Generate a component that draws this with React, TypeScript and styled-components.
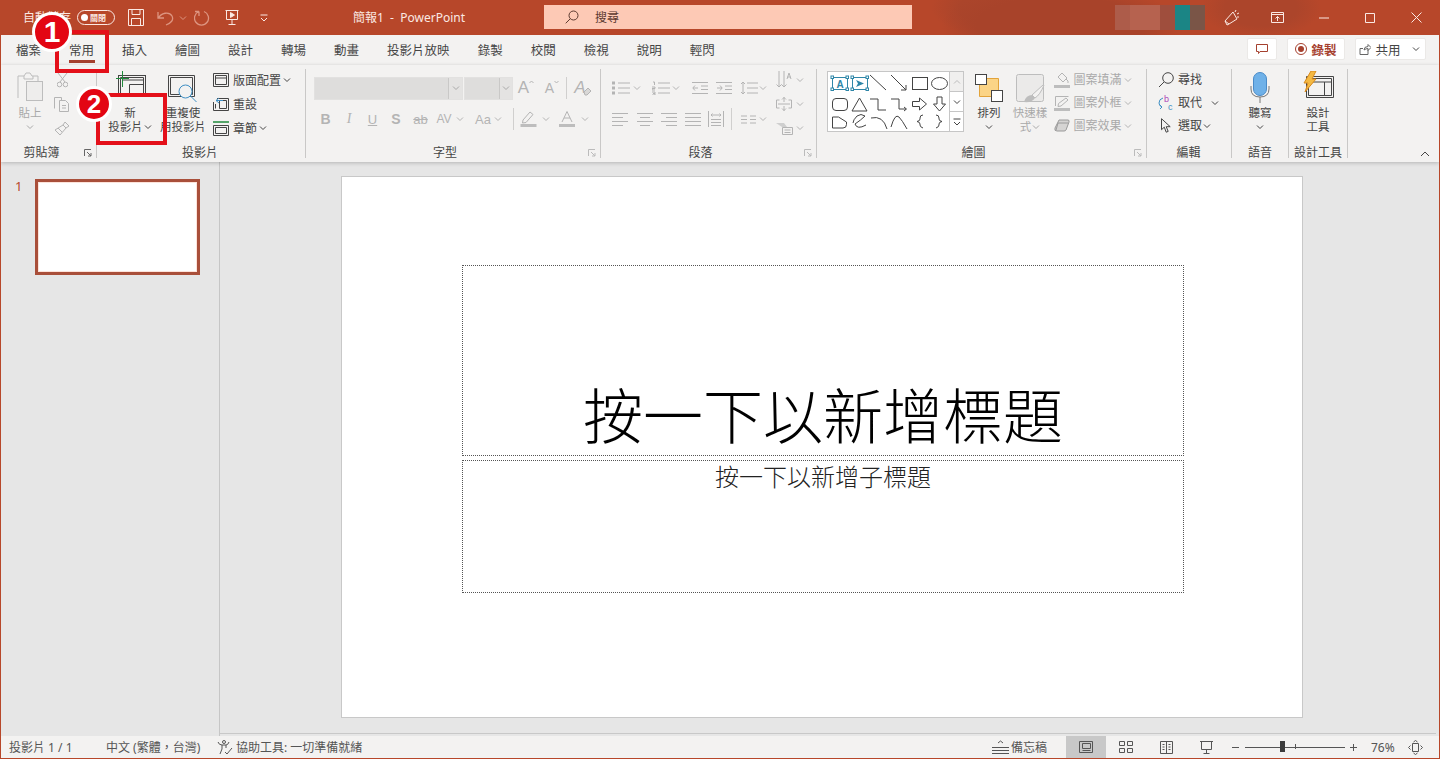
import React from "react";
import styled, { createGlobalStyle } from "styled-components";

const Global = createGlobalStyle`
  html, body { margin: 0; padding: 0; background: #e6e6e6; }
  body { font-family: "Noto Sans", "Noto Sans CJK TC", "Liberation Sans", sans-serif; overflow: hidden; }
  * { box-sizing: border-box; }
`;

const RED = "#b7472a";
const DIS = "#b4b4b4";
const INK = "#454545";

const Frame = styled.div`
  position: relative; width: 1440px; height: 759px; display: flex; flex-direction: column;
  border: 1px solid ${RED}; border-top: 0; background: #e6e6e6; overflow: hidden;
`;

/* ---------- generic drawing ---------- */
const Svg = styled.svg<{ $c?: string }>`
  display: block; flex: none; fill: none; stroke: currentColor; stroke-width: 1; color: ${p => p.$c ?? INK};
`;
const Chev = ({ c = INK }: { c?: string }) => (
  <Svg $c={c} width="8" height="6" viewBox="0 0 8 6"><path d="M1 1.5l3 3 3-3" /></Svg>
);

/* ---------- title bar ---------- */
const TitleBar = styled.header`
  height: 35px; flex: none; display: flex; align-items: center; color: #fbe9e3;
  background:
    radial-gradient(ellipse 120px 40px at 1060px 25px, #a8432a 0 70%, transparent 100%),
    radial-gradient(ellipse 70px 30px at 1000px 8px, #ab452b 0 60%, transparent 100%),
    radial-gradient(ellipse 60px 30px at 1260px 8px, #ac452b 0 60%, transparent 100%),
    ${RED};
`;
const QuickAccess = styled.div`
  width: 352px; flex: none; display: flex; align-items: center; padding-left: 22px;
`;
const AutoSave = styled.span`font-size: 12px; width: 47px; white-space: nowrap; margin-top: -2px;`;
const Toggle = styled.span`
  margin-left: 7px; width: 38px; height: 15px; border: 1px solid #fbe9e3; border-radius: 8px;
  display: flex; align-items: center; gap: 2px; padding-left: 3px; font-size: 8px; font-weight: 700;
  &::before { content: ""; width: 7px; height: 7px; border-radius: 50%; background: #fff; }
`;
const Qa = styled.span<{ $ml: number }>`margin-left: ${p => p.$ml}px; display: flex;`;
const DocTitle = styled.div`width: 191px; flex: none; font-size: 12px; white-space: pre; margin-top: -2px;`;
const Search = styled.div`
  width: 368px; height: 24px; flex: none; margin-top: -1px; background: #fdc9b5; color: #5c3a30; display: flex; align-items: center;
  padding-left: 21px; gap: 16px; font-size: 12px;
`;
const Mosaic = styled.div`
  margin-left: 203px; width: 90px; height: 25px; flex: none; margin-top: -1px;
  background: linear-gradient(90deg, #ad5c4a 0 15px, #b6624f 15px 45px, #9f4e3d 45px 60px, #1b8585 60px 75px, #7a5547 75px 90px);
`;
const TitleIcon = styled.span<{ $w: number; $ml?: number }>`
  width: ${p => p.$w}px; margin-left: ${p => p.$ml ?? 0}px; flex: none; display: flex; justify-content: center;
`;

/* ---------- tabs ---------- */
const TabBar = styled.nav`
  height: 30px; flex: none; display: flex; align-items: center; background: #f3f2f1; padding-left: 1px; padding-right: 13px;
`;
const Tab = styled.span<{ $on?: boolean }>`
  height: 30px; padding: 0 14px 1px; display: flex; align-items: center; position: relative; font-size: 12.5px; color: ${INK}; white-space: nowrap;
  ${p => p.$on ? `&::after { content: ""; position: absolute; left: 14px; right: 13px; bottom: 2px; height: 3px; background: #a5402e; }` : ""}
`;
const TabActions = styled.div`margin-left: auto; display: flex; gap: 10px; align-items: center; margin-top: -2px;`;
const PillBtn = styled.span<{ $w: number; $c?: string; $b?: boolean }>`
  width: ${p => p.$w}px; height: 22px; background: #fff; border: 1px solid #ebe9e7; border-radius: 2px; display: flex; align-items: center; justify-content: center;
  gap: 4px; font-size: 12.5px; color: ${p => p.$c ?? INK}; font-weight: ${p => p.$b ? 700 : 400};
`;

/* ---------- ribbon ---------- */
const Ribbon = styled.section`
  height: 97px; flex: none; display: flex; background: #f3f2f1; padding: 4px 0; position: relative; z-index: 2;
  box-shadow: 0 1px 4px rgba(0,0,0,.22);
`;
const Group = styled.div<{ $w: number }>`
  width: ${p => p.$w}px; flex: none; display: flex; flex-direction: column; border-right: 1px solid #c9c8c7; position: relative;
`;
const GroupBody = styled.div`flex: 1; display: flex; min-height: 0;`;
const GroupLabel = styled.div<{ $pr?: number }>`
  height: 14px; line-height: 14px; text-align: center; font-size: 12px; color: ${INK}; padding-right: ${p => p.$pr ?? 0}px; margin-bottom: -2px; white-space: nowrap;
`;
const Launcher = styled.span`position: absolute; right: 4px; bottom: 1px;`;
const Big = styled.div<{ $w: number; $ml?: number; $dis?: boolean }>`
  width: ${p => p.$w}px; margin-left: ${p => p.$ml ?? 0}px; flex: none; display: flex; flex-direction: column; align-items: center; padding-top: 2px;
  font-size: 11.5px; line-height: 14px; color: ${p => p.$dis ? "#a9a9a9" : INK}; white-space: nowrap;
`;
const BigIcon = styled.div`height: 35px; display: flex; justify-content: center; align-items: flex-start;`;
const BigLine = styled.div`height: 14px; display: flex; align-items: center; gap: 1px;`;
const Col = styled.div<{ $ml?: number }>`
  margin-left: ${p => p.$ml ?? 0}px; display: flex; flex-direction: column; gap: 2px; flex: none;
`;
const SmallRow = styled.div<{ $h?: number }>`
  height: ${p => p.$h ?? 22}px; display: flex; align-items: center; white-space: nowrap;
`;
const Tool = styled.span<{ $w: number; $ml?: number; $c?: string; $f?: string }>`
  width: ${p => p.$w}px; margin-left: ${p => p.$ml ?? 0}px; flex: none; display: flex; justify-content: center; align-items: center;
  color: ${p => p.$c ?? DIS}; font: ${p => p.$f ?? `13px "Liberation Sans", sans-serif`};
`;
const RowText = styled.span<{ $w: number; $ml?: number; $dis?: boolean }>`
  width: ${p => p.$w}px; margin-left: ${p => p.$ml ?? 4}px; flex: none; padding-bottom: 1px; text-align: center;
  font-size: 12px; color: ${p => p.$dis ? "#a9a9a9" : INK};
`;
const Stack = styled.div<{ $w: number }>`width: ${p => p.$w}px; flex: none;`;
const ToolRow = styled.div<{ $mt: number }>`height: 22px; margin-top: ${p => p.$mt}px; display: flex; align-items: center;`;
const Combo = styled.span<{ $w: number; $ml?: number }>`
  width: ${p => p.$w}px; margin-left: ${p => p.$ml ?? 0}px; height: 23px; flex: none; background: #dedddc; display: flex; justify-content: flex-end;
  border: 1px solid #e2e1e0;
`;
const ComboArrow = styled.span<{ $w: number }>`
  width: ${p => p.$w}px; border-left: 1px solid #c9c8c7; background: #e4e3e2; display: flex; align-items: center; justify-content: center;
`;
const ToolSep = styled.span<{ $ml: number }>`width: 1px; height: 22px; margin-left: ${p => p.$ml}px; background: #d0cfce; flex: none;`;
const Gallery = styled.div`
  margin: 2px 0 0 10px; height: 61px; display: flex; flex: none; align-self: flex-start;
`;
const GalleryBox = styled.div`width: 122px; height: 61px; background: #fff; border: 1px solid #c6c6c6; border-right: 0;`;
const GalleryBtns = styled.div`width: 15px; display: flex; flex-direction: column;`;
const GalleryBtn = styled.span<{ $top?: boolean }>`
  flex: 1; border: 1px solid #c6c6c6; background: ${p => p.$top ? "#f0efee" : "#fff"}; display: flex; align-items: center; justify-content: center; margin-top: ${p => p.$top ? 0 : -1}px;
`;
const Collapse = styled.span`margin: auto 9px 1px auto; align-self: flex-end;`;

/* ---------- main ---------- */
const Main = styled.main`flex: 1; min-height: 0; display: flex; background: #e6e6e6;`;
const Side = styled.aside`width: 219px; flex: none; border-right: 1px solid #c6c6c6; display: flex; padding: 17px 0 0 14px; gap: 15px; align-items: flex-start;`;
const SlideNo = styled.span`font-size: 13px; line-height: 14px; color: ${RED}; width: 5px;`;
const Thumb = styled.div`width: 165px; height: 96px; background: #fff; border: 3px solid #a94f3a; box-shadow: inset 0 0 0 1px #fde3da;`;
const Stage = styled.div`flex: 1; display: flex; flex-direction: column; align-items: stretch; margin: 0 3px 2px 0; border-bottom: 1px solid #c8c8c8; padding: 14px 0 0 121px;`;
const Slide = styled.div`
  width: 962px; height: 542px; background: #fff; border: 1px solid #c8c8c8; display: flex; flex-direction: column; align-items: center; padding: 88px 0 0 2px; gap: 4px;
`;
const Placeholder = styled.div<{ $h: number; $title?: boolean }>`
  width: 722px; height: ${p => p.$h}px; border: 1px dotted #555; display: flex; justify-content: center; flex: none;
  align-items: ${p => p.$title ? "flex-end" : "flex-start"}; color: ${p => p.$title ? "#000" : "#222"};
  font-family: "Noto Sans CJK TC", sans-serif; font-weight: 300;
  font-size: ${p => p.$title ? 60 : 24}px; line-height: ${p => p.$title ? 60 : 24}px;
  padding: ${p => p.$title ? "0 0 12px" : "3px 0 0"};
`;

/* ---------- status bar ---------- */
const Status = styled.footer`
  height: 22px; flex: none; background: #f3f2f1; display: flex; align-items: center; font-size: 12px; color: #555; padding-left: 8px; white-space: nowrap; padding-right: 16px;
`;
const StatusText = styled.span<{ $w?: number; $ml?: number }>`
  margin-left: ${p => p.$ml ?? 0}px; ${p => p.$w ? `width: ${p.$w}px;` : ""} flex: none;
`;
const StatusRight = styled.div`margin-left: auto; display: flex; align-items: center; height: 22px;`;
const ViewBtn = styled.span<{ $on?: boolean; $ml?: number }>`
  width: 40px; height: 22px; margin-left: ${p => p.$ml ?? 0}px; display: flex; align-items: center; justify-content: center; background: ${p => p.$on ? "#c8c8c8" : "transparent"};
`;
const Zoom = styled.div`position: relative; width: 100px; height: 14px; margin: 0 5px 0 6px; display: flex; align-items: center;
  &::before { content: ""; flex: 1; height: 1px; background: #555; }
`;
const ZoomKnob = styled.span`position: absolute; left: 35px; top: 1px; width: 5px; height: 11px; background: #3c3c3c;`;
const ZoomTick = styled.span`position: absolute; left: 50px; top: 4px; width: 1px; height: 5px; background: #555;`;
const ZoomEnd = styled.span`margin-left: 6px; display: flex;`;

/* ---------- call-outs over the screenshot ---------- */
const RedBox = styled.div<{ $l: number; $t: number; $w: number; $h: number }>`
  position: absolute; left: ${p => p.$l}px; top: ${p => p.$t}px; width: ${p => p.$w}px; height: ${p => p.$h}px; border: 4px solid #e4101a; z-index: 5;
`;
const Badge = styled.div<{ $l: number; $t: number; $d: number }>`
  position: absolute; left: ${p => p.$l}px; top: ${p => p.$t}px; width: ${p => p.$d}px; height: ${p => p.$d}px; border-radius: 50%; background: #e30613; border: 3px solid #fff;
  color: #fff; display: flex; align-items: center; justify-content: center; font: 700 ${p => p.$d - 10}px/1 "Liberation Sans", sans-serif; z-index: 6;
`;

/* ---------- icons ---------- */
const ListIcon = ({ rows, w = 18 }: { rows: [number, number][]; w?: number }) => (
  <Svg $c={DIS} width={w} height="15" viewBox={`0 0 ${w} 15`}>
    {rows.map(([a, b], i) => <path key={i} d={`M${a} ${1.5 + i * (12 / (rows.length - 1))}H${b}`} />)}
  </Svg>
);
const Align4 = (r: [number, number][]) => <ListIcon w={16} rows={r} />;
const LauncherIcon = ({ c = "#bbb" }: { c?: string }) => (
  <Svg $c={c} width="8" height="8" viewBox="0 0 8 8"><path d="M.5 7V.5H7M3 3l4 4M7 4v3H4" /></Svg>
);

const Shapes = () => (
  <Svg $c="#444" width="121" height="59" viewBox="0 0 121 59">
    <g stroke="#2f86a8">
      <rect x="4.500" y="5.500" width="15" height="12" /><rect x="24.500" y="5.500" width="15" height="12" />
      {[[4, 5], [19, 5], [4, 17], [19, 17], [24, 5], [39, 5], [24, 17], [39, 17]].map(([x, y], i) => <rect key={i} x={x - 1} y={y - 1} width="2.500" height="2.500" fill="#fff" />)}
      <text x="12" y="15.500" textAnchor="middle" fontSize="10" fontWeight="700" fill="#2f86a8" stroke="none" fontFamily="Liberation Sans">A</text>
      <path d="M28 8l8 3.500-8 3.500 2-3.500z" fill="#2f86a8" stroke="none" />
    </g>
    <path d="M42 3l16 15M63 3l15 15M78 13v5h-5" />
    <rect x="84.500" y="5.500" width="15" height="12" /><ellipse cx="111.500" cy="11.500" rx="8" ry="6" />
    <rect x="4.500" y="26.500" width="15" height="12" rx="3.500" />
    <path d="M31.500 26l7.500 13H24zM42 27h8v11h8M63 27h8v10h7M76 35l2.500 2-2.500 2M84.500 29.500h7V26l7 6-7 6v-3.500h-7zM109 25h5v7h3.500l-6 7-6-7h3.500z" />
    <path d="M4.500 56V45h6l8 5v2.500q0 3.500-3.500 3.500zM38 53q-9 5-11-1 6-4 10-8-4-3-8 0-4 4-4 7M43 46q12-3 16 11M63 55q4-14 8-10 3 3 8 12" />
    <path d="M95 43q-3 0-3 3v1q0 2-3 2.500 3 .5 3 2.500v1q0 2 3 3M108 43q3 0 3 3v1q0 2 3 2.500-3 .5-3 2.500v1q0 2-3 3" />
  </Svg>
);

const App = () => (
  <Frame>
    <Global />
    <TitleBar>
      <QuickAccess>
        <AutoSave>自動儲存</AutoSave>
        <Toggle>關閉</Toggle>
        <Qa $ml={13}><Svg $c="#fbe9e3" width="16" height="17" viewBox="0 0 16 17"><path d="M.5.500h15v16H.5zM4 .5v5h8v-5M3.500 16.500V9.500h9v7" /></Svg></Qa>
        <Qa $ml={13}><Svg $c="#dd9581" width="17" height="16" viewBox="0 0 17 16"><path d="M1 2v6h6M1.500 8C4 3 12 1 15 6c2 4-1 7-6 9" strokeWidth="1.300" /></Svg></Qa>
        <Qa $ml={5}><Svg $c="#dd9581" width="8" height="6" viewBox="0 0 8 6"><path d="M1 1.500l3 3 3-3" /></Svg></Qa>
        <Qa $ml={7}><Svg $c="#dd9581" width="17" height="17" viewBox="0 0 17 17"><path d="M10 2.500a7 7 0 1 1-5 0M5 2.500V7M5 2.500H1" strokeWidth="1.300" /></Svg></Qa>
        <Qa $ml={14}><Svg $c="#fbe9e3" width="14" height="17" viewBox="0 0 14 17"><path d="M.5 1.500h13M1.500 1.500v9h11v-9M7 10.500v5M3.500 15.500h7" /><path d="M5.500 3.500l4 2.500-4 2.500z" fill="#fbe9e3" /></Svg></Qa>
        <Qa $ml={21}><Svg $c="#fbe9e3" width="8" height="8" viewBox="0 0 8 8"><path d="M.5 1h7M1 4l3 3 3-3" /></Svg></Qa>
      </QuickAccess>
      <DocTitle>簡報1  -  PowerPoint</DocTitle>
      <Search>
        <Svg $c="#5c3a30" width="14" height="14" viewBox="0 0 14 14"><circle cx="8.500" cy="5.500" r="4.500" /><path d="M5.300 8.700L.7 13.300" /></Svg>
        <span>搜尋</span>
      </Search>
      <Mosaic />
      <TitleIcon $w={54}><Svg $c="#fbe9e3" width="16" height="17" viewBox="0 0 16 17" strokeWidth="1.200"><path d="M1 12L9 3l4 7-8 5zM5 15l-2 1-2-4M12 1l-1 2M15 4l-2 1M15 8h-2" /></Svg></TitleIcon>
      <TitleIcon $w={36}><Svg $c="#fbe9e3" width="13" height="11" viewBox="0 0 13 11"><path d="M.5.500h12v10H.5zM.5 2.500h12M6.500 9V4.500M4.500 6.500l2-2 2 2" /></Svg></TitleIcon>
      <TitleIcon $w={46} $ml={6}><Svg $c="#fbe9e3" width="10" height="2" viewBox="0 0 10 2"><path d="M0 1h10" /></Svg></TitleIcon>
      <TitleIcon $w={46}><Svg $c="#fbe9e3" width="10" height="10" viewBox="0 0 10 10"><path d="M.5.500h9v9h-9z" /></Svg></TitleIcon>
      <TitleIcon $w={46}><Svg $c="#fbe9e3" width="11" height="11" viewBox="0 0 11 11"><path d="M.5.500l10 10M10.500.500l-10 10" /></Svg></TitleIcon>
    </TitleBar>

    <TabBar>
      <Tab>檔案</Tab><Tab $on>常用</Tab><Tab>插入</Tab><Tab>繪圖</Tab><Tab>設計</Tab><Tab>轉場</Tab><Tab>動畫</Tab><Tab>投影片放映</Tab><Tab>錄製</Tab><Tab>校閱</Tab><Tab>檢視</Tab><Tab>說明</Tab><Tab>輕閃</Tab>
      <TabActions>
        <PillBtn $w={30}><Svg $c="#a5402e" width="12" height="12" viewBox="0 0 12 12"><path d="M.5 1.500h11v7H4l-1.500 2v-2h-2z" /></Svg></PillBtn>
        <PillBtn $w={58} $c="#a5402e" $b><Svg $c="#a5402e" width="12" height="12" viewBox="0 0 12 12"><circle cx="6" cy="6" r="5.500" /><circle cx="6" cy="6" r="3" fill="#a5402e" stroke="none" /></Svg>錄製</PillBtn>
        <PillBtn $w={71}><Svg $c="#666" width="12" height="12" viewBox="0 0 12 12"><path d="M9 6.500v5H1v-6h3M5 7q0-3.500 4-3.500V1.500l3 3-3 3V5.500q-2 0-4 1.500z" /></Svg>共用<Tool $w={12} $ml={5} $c={INK}><Chev /></Tool></PillBtn>
      </TabActions>
    </TabBar>

    <Ribbon>
      <Group $w={96}>
        <GroupBody>
          <Big $w={30} $ml={14} $dis>
            <BigIcon><Svg $c="#bdbdbd" width="27" height="31" viewBox="0 0 27 31"><path d="M1 27V5h6l2-3h4l2 3h6v5" /><path d="M7 5v3h9V5" /><rect x="9.500" y="10.500" width="16" height="19" fill="#eeedec" /></Svg></BigIcon>
            <BigLine>貼上</BigLine><BigLine><Chev c="#a9a9a9" /></BigLine>
          </Big>
          <Col $ml={7}>
            <SmallRow><Tool $w={20}><Svg $c={DIS} width="11" height="16" viewBox="0 0 11 16"><path d="M1 1l7 9M10 1L3 10" /><circle cx="2.500" cy="12.500" r="2.300" /><circle cx="8.500" cy="12.500" r="2.300" /></Svg></Tool></SmallRow>
            <SmallRow><Tool $w={20}><Svg $c={DIS} width="16" height="15" viewBox="0 0 16 15"><path d="M.5 11.500V.5h7v3M5.500 3.500h6l3 3v8h-9zM8 8.500h4M8 11h4" /></Svg></Tool></SmallRow>
            <SmallRow><Tool $w={20}><Svg $c={DIS} width="16" height="15" viewBox="0 0 16 15"><path d="M11 1l4 4-3 2-3-3zM9 4L1 9l5 5 6-7" /><path d="M4 7l4 4" /></Svg></Tool></SmallRow>
          </Col>
        </GroupBody>
        <GroupLabel $pr={14}>剪貼簿</GroupLabel>
        <Launcher><LauncherIcon c="#666" /></Launcher>
      </Group>

      <Group $w={209}>
        <GroupBody>
          <Big $w={44} $ml={11}>
            <BigIcon>
              <Svg width="31" height="27" viewBox="0 0 31 27">
                <rect x="3.500" y="4.500" width="27" height="21" /><path d="M5.500 6.500h23v17h-23zM14.500 13.500v10M14.500 13.500h14M8 9h20" />
                <path d="M7.500 0v16M1 7.500h13" stroke="#1f8a3b" />
              </Svg>
            </BigIcon>
            <BigLine>新</BigLine><BigLine>投影片<Chev /></BigLine>
          </Big>
          <Big $w={46} $ml={8}>
            <BigIcon>
              <Svg width="32" height="30" viewBox="0 0 32 30" style={{ marginTop: 3 }}>
                <path d="M1.500 1.500h26v21h-26zM3.500 3.500h22v17h-22z" /><circle cx="18.500" cy="17.500" r="6.500" fill="#f3f2f1" stroke="#3f8fc4" /><path d="M23.500 22l6 6" stroke="#3f8fc4" />
              </Svg>
            </BigIcon>
            <BigLine>重複使</BigLine><BigLine>用投影片</BigLine>
          </Big>
          <Col $ml={7}>
            <SmallRow><Tool $w={16} $c={INK}><Svg width="16" height="14" viewBox="0 0 16 14"><path d="M.5.500h15v13H.5zM2.500 2.500h11v9h-11zM2.500 5h11" /></Svg></Tool><RowText $w={48}>版面配置</RowText><Tool $w={8} $ml={2}><Chev /></Tool></SmallRow>
            <SmallRow><Tool $w={16} $c={INK}><Svg width="16" height="14" viewBox="0 0 16 14"><path d="M4 1.500h11.500v12H.5V5M2.500 11.500V7M13.500 3.500h-7v8h7z" /><path d="M6 1L3 3.500 6 6" stroke="#3f8fc4" /><path d="M3 3.500h7" stroke="#3f8fc4" /></Svg></Tool><RowText $w={24}>重設</RowText></SmallRow>
            <SmallRow><Tool $w={16} $c={INK}><Svg width="16" height="15" viewBox="0 0 16 15"><path d="M0 1h16" stroke="#1f8a3b" strokeWidth="1.500" /><path d="M.5 4.500h15v10H.5zM2.500 6.500h11v6h-11z" /></Svg></Tool><RowText $w={24}>章節</RowText><Tool $w={8} $ml={2}><Chev /></Tool></SmallRow>
          </Col>
        </GroupBody>
        <GroupLabel $pr={2}>投影片</GroupLabel>
      </Group>

      <Group $w={295}>
        <GroupBody>
          <Stack $w={294}>
            <ToolRow $mt={8}>
              <Combo $w={149} $ml={8}><ComboArrow $w={14}><Chev c="#a9a9a9" /></ComboArrow></Combo>
              <Combo $w={49} $ml={1}><ComboArrow $w={13}><Chev c="#a9a9a9" /></ComboArrow></Combo>
              <Tool $w={14} $ml={6} $f={`17px "Liberation Sans", sans-serif`}>A<Svg $c={DIS} width="5" height="8" viewBox="0 0 5 8" style={{ marginBottom: 8 }}><path d="M.5 3L2.500 1l2 2" /></Svg></Tool>
              <Tool $w={14} $ml={12} $f={`14px "Liberation Sans", sans-serif`}>A<Svg $c={DIS} width="5" height="8" viewBox="0 0 5 8" style={{ marginBottom: 8 }}><path d="M.5 1l2 2 2-2" /></Svg></Tool>
              <ToolSep $ml={7} />
              <Tool $w={18} $ml={7} $f={`italic 17px "Liberation Sans", sans-serif`}>A<Svg $c={DIS} width="9" height="9" viewBox="0 0 9 9" style={{ marginLeft: -3, marginTop: 7 }}><path d="M1 5l4-4 3 3-4 4H2z" fill="#d9d8d7" /></Svg></Tool>
            </ToolRow>
            <ToolRow $mt={9}>
              <Tool $w={23} $ml={8} $f={`700 14px "Liberation Sans", sans-serif`}>B</Tool>
              <Tool $w={24} $f={`italic 14px "Liberation Serif", serif`}>I</Tool>
              <Tool $w={23} style={{ textDecoration: "underline" }}>U</Tool>
              <Tool $w={24} $f={`700 14px "Liberation Sans", sans-serif`}>S</Tool>
              <Tool $w={25} style={{ textDecoration: "line-through" }}>ab</Tool>
              <Tool $w={22} $f={`12px "Liberation Sans", sans-serif`}>AV</Tool>
              <Tool $w={10}><Chev c={DIS} /></Tool>
              <Tool $w={20} $ml={8}>Aa</Tool>
              <Tool $w={10}><Chev c={DIS} /></Tool>
              <ToolSep $ml={10} />
              <Tool $w={18} $ml={5}><Svg $c={DIS} width="17" height="16" viewBox="0 0 17 16"><path d="M3 9l7-8 3 2.500-7 8-3.500.5z" /><rect x=".5" y="13" width="16" height="3" fill="#bdbdbd" stroke="none" /></Svg></Tool>
              <Tool $w={10} $ml={4}><Chev c={DIS} /></Tool>
              <Tool $w={18} $ml={7}><Svg $c={DIS} width="16" height="16" viewBox="0 0 16 16"><path d="M3 11L8 .5 13 11M5 7h6" /><rect y="13" width="16" height="3" fill="#bdbdbd" stroke="none" /></Svg></Tool>
              <Tool $w={10} $ml={4}><Chev c={DIS} /></Tool>
            </ToolRow>
          </Stack>
        </GroupBody>
        <GroupLabel $pr={16}>字型</GroupLabel>
        <Launcher><LauncherIcon /></Launcher>
      </Group>

      <Group $w={216}>
        <GroupBody>
          <Stack $w={166}>
            <ToolRow $mt={8}>
              <Tool $w={18} $ml={11}><Svg $c={DIS} width="18" height="14" viewBox="0 0 18 14"><path d="M6 2h12M6 7h12M6 12h12" /><path d="M0 .5h3v3H0zM0 5.500h3v3H0zM0 10.500h3v3H0z" fill={DIS} stroke="none" /></Svg></Tool>
              <Tool $w={8} $ml={3}><Chev c={DIS} /></Tool>
              <Tool $w={18} $ml={11}><Svg $c={DIS} width="18" height="14" viewBox="0 0 18 14"><path d="M6 2h12M6 7h12M6 12h12M1 1h1.500v3M0 6h3v1.500H0V9h3M0 11h3v1.500H1 3V14H0" /></Svg></Tool>
              <Tool $w={8} $ml={2}><Chev c={DIS} /></Tool>
              <Tool $w={16} $ml={12}><Svg $c={DIS} width="16" height="12" viewBox="0 0 16 12"><path d="M0 .500h16M9 4h7M9 7.500h7M0 11.500h16M6 6H1M3 3.500L.8 6 3 8.500" /></Svg></Tool>
              <Tool $w={16} $ml={8}><Svg $c={DIS} width="16" height="12" viewBox="0 0 16 12"><path d="M0 .500h16M9 4h7M9 7.500h7M0 11.500h16M1 6h5M4 3.500L6.200 6 4 8.500" /></Svg></Tool>
              <Tool $w={18} $ml={8}><Svg $c={DIS} width="18" height="14" viewBox="0 0 18 14"><path d="M7 2h11M7 7h11M7 12h11M3 1v12M1 3l2-2 2 2M1 11l2 2 2-2" /></Svg></Tool>
              <Tool $w={8} $ml={1}><Chev c={DIS} /></Tool>
            </ToolRow>
            <ToolRow $mt={9}>
              <Tool $w={16} $ml={11}>{Align4([[0, 16], [0, 11], [0, 16], [0, 11]])}</Tool>
              <Tool $w={16} $ml={9}>{Align4([[0, 16], [3, 13], [0, 16], [3, 13]])}</Tool>
              <Tool $w={16} $ml={8}>{Align4([[0, 16], [5, 16], [0, 16], [5, 16]])}</Tool>
              <Tool $w={15} $ml={8}>{Align4([[0, 16], [0, 16], [0, 16], [0, 16]])}</Tool>
              <Tool $w={16} $ml={8}><Svg $c={DIS} width="16" height="16" viewBox="0 0 16 16"><path d="M.5 0v16M15.500 0v16M3 4h10M4.500 2.500L3 4l1.500 1.500M11.500 2.500L13 4l-1.500 1.500M3 8.500h10M3 11.500h10M3 14.500h10" /></Svg></Tool>
              <ToolSep $ml={7} />
              <Tool $w={15} $ml={9}><Svg $c={DIS} width="15" height="9" viewBox="0 0 15 9"><path d="M0 1h6M9 1h6M0 4.500h6M9 4.500h6M0 8h6M9 8h6" /></Svg></Tool>
              <Tool $w={8} $ml={3}><Chev c={DIS} /></Tool>
            </ToolRow>
          </Stack>
          <Col $ml={9}>
            <SmallRow><Tool $w={16}><Svg $c={DIS} width="16" height="18" viewBox="0 0 16 18"><path d="M3 0v16M0.500 13.500L3 16l2.500-2.500M8 0v16M5.500 13.500L8 16l2.500-2.500M11 8l2-6 2 6M11.500 6h3" /></Svg></Tool><Tool $w={8} $ml={4}><Chev c={DIS} /></Tool></SmallRow>
            <SmallRow><Tool $w={16}><Svg $c={DIS} width="16" height="14" viewBox="0 0 16 14"><path d="M.5 3h3M12.500 3h3M.5 3v8M15.500 3v8M.5 11h3M12.500 11h3M8 0v5M6 2.500L8 .5l2 2M8 9v5M6 11.500l2 2 2-2M2 7h12" /></Svg></Tool><Tool $w={8} $ml={4}><Chev c={DIS} /></Tool></SmallRow>
            <SmallRow><Tool $w={16}><Svg $c={DIS} width="17" height="13" viewBox="0 0 17 13"><path d="M0 1h8l3 4H6z" fill="#cfcfcf" stroke="none" /><path d="M6.500 5.500h10v7h-10zM8.500 8h6M8.500 10.500h6" /></Svg></Tool><Tool $w={8} $ml={4}><Chev c={DIS} /></Tool></SmallRow>
          </Col>
        </GroupBody>
        <GroupLabel $pr={16}>段落</GroupLabel>
        <Launcher><LauncherIcon /></Launcher>
      </Group>

      <Group $w={330}>
        <GroupBody>
          <Gallery>
            <GalleryBox><Shapes /></GalleryBox>
            <GalleryBtns>
              <GalleryBtn $top><Svg $c="#bdbdbd" width="8" height="6" viewBox="0 0 8 6"><path d="M1 4.500l3-3 3 3" /></Svg></GalleryBtn>
              <GalleryBtn><Chev /></GalleryBtn>
              <GalleryBtn><Svg width="8" height="8" viewBox="0 0 8 8"><path d="M.5 1h7M1 4l3 3 3-3" /></Svg></GalleryBtn>
            </GalleryBtns>
          </Gallery>
          <Big $w={30} $ml={10}>
            <BigIcon>
              <Svg width="28" height="29" viewBox="0 0 28 29" style={{ marginTop: 3 }}>
                <path d="M4.500 4.500h19v18h-19z" fill="#fbd486" stroke="#e2a33a" />
                <rect x=".5" y=".5" width="11" height="10" fill="#fff" stroke="#444" /><rect x="16.500" y="16.500" width="11" height="11" fill="#fff" stroke="#444" />
              </Svg>
            </BigIcon>
            <BigLine>排列</BigLine><BigLine><Chev /></BigLine>
          </Big>
          <Big $w={40} $ml={6} $dis>
            <BigIcon>
              <Svg $c="#bdbdbd" width="30" height="30" viewBox="0 0 30 30" style={{ marginTop: 2 }}>
                <rect x="1.500" y="1.500" width="27" height="27" rx="2" fill="#ebeae9" />
                <path d="M28 12L17 22l3 3q5-3 9-13z" fill="#f3f2f1" /><path d="M9 29q2-7 8-7l3 3q-3 5-11 4z" fill="#bdbdbd" stroke="none" />
              </Svg>
            </BigIcon>
            <BigLine>快速樣</BigLine><BigLine>式<Chev c="#a9a9a9" /></BigLine>
          </Big>
          <Col $ml={4}>
            <SmallRow $h={21}><Tool $w={16}><Svg $c={DIS} width="16" height="16" viewBox="0 0 16 16"><path d="M8 1l5 5-4 4-5-5zM12 7q3 2 2 4" /><rect y="13" width="16" height="3" fill="#bdbdbd" stroke="none" /></Svg></Tool><RowText $w={49} $ml={3} $dis>圖案填滿</RowText><Tool $w={8} $ml={2}><Chev c={DIS} /></Tool></SmallRow>
            <SmallRow $h={21}><Tool $w={16}><Svg $c={DIS} width="16" height="16" viewBox="0 0 16 16"><path d="M1.500 11V1.500h13M12 3l2 2-7 6-3 .5.500-3z" /><rect y="13" width="16" height="3" fill="#bdbdbd" stroke="none" /></Svg></Tool><RowText $w={49} $ml={3} $dis>圖案外框</RowText><Tool $w={8} $ml={2}><Chev c={DIS} /></Tool></SmallRow>
            <SmallRow $h={21}><Tool $w={16}><Svg $c="#9a9a9a" width="16" height="13" viewBox="0 0 16 13"><path d="M5 1h9q1.500 0 1 2l-3 8q-.5 1-2 1H3q-3 0-2-3z" fill="#d5d4d3" /><path d="M4 4h10M4 4l-2 7" /></Svg></Tool><RowText $w={49} $ml={3} $dis>圖案效果</RowText><Tool $w={8} $ml={2}><Chev c={DIS} /></Tool></SmallRow>
          </Col>
        </GroupBody>
        <GroupLabel $pr={16}>繪圖</GroupLabel>
        <Launcher><LauncherIcon /></Launcher>
      </Group>

      <Group $w={85}>
        <GroupBody>
          <Col $ml={11}>
            <SmallRow $h={21}><Tool $w={16} $c={INK}><Svg width="16" height="16" viewBox="0 0 16 16"><circle cx="10" cy="6" r="5.300" /><path d="M6 10l-5 5" /></Svg></Tool><RowText $w={24}>尋找</RowText></SmallRow>
            <SmallRow $h={21}><Tool $w={16} $c={INK}><Svg $c="#3f8fc4" width="16" height="17" viewBox="0 0 16 17"><path d="M5 4q-4 1-4 5 0 3 3 4M2 11l2 2-2 2" /><text x="6" y="8" fontSize="9" fill="#b048b8" stroke="none" fontFamily="Liberation Sans">b</text><text x="10" y="16" fontSize="9" fill="#3f8fc4" stroke="none" fontFamily="Liberation Sans">c</text></Svg></Tool><RowText $w={24}>取代</RowText><Tool $w={8} $ml={9}><Chev /></Tool></SmallRow>
            <SmallRow $h={21}><Tool $w={16} $c={INK}><Svg width="11" height="15" viewBox="0 0 11 15"><path d="M.5.700v11l2.800-2.500 1.900 5 2-.8-2-4.700h4z" /></Svg></Tool><RowText $w={24}>選取</RowText><Tool $w={8} $ml={1}><Chev /></Tool></SmallRow>
          </Col>
        </GroupBody>
        <GroupLabel $pr={1}>編輯</GroupLabel>
      </Group>

      <Group $w={57}>
        <GroupBody>
          <Big $w={56}>
            <BigIcon>
              <Svg $c="#777" width="20" height="31" viewBox="0 0 20 31" style={{ marginTop: 1 }}>
                <rect x="3.500" y=".5" width="13" height="23" rx="6.500" fill="#6fb1e8" stroke="#4a8bc8" /><path d="M1 14v3q0 8 9 8t9-8v-3M10 25v6" />
              </Svg>
            </BigIcon>
            <BigLine>聽寫</BigLine><BigLine><Chev /></BigLine>
          </Big>
        </GroupBody>
        <GroupLabel>語音</GroupLabel>
      </Group>

      <Group $w={59}>
        <GroupBody>
          <Big $w={58}>
            <BigIcon>
              <Svg width="31" height="27" viewBox="0 0 31 27">
                <path d="M3.500 5.500h27v21h-27zM5.500 7.500h23v17h-23zM6 11h22M21.500 11v13" />
                <path d="M8 0L1 12h4l-3 9 11-13H9l4-8z" fill="#f4b942" stroke="#d98a1e" />
              </Svg>
            </BigIcon>
            <BigLine>設計</BigLine><BigLine>工具</BigLine>
          </Big>
        </GroupBody>
        <GroupLabel>設計工具</GroupLabel>
      </Group>

      <Collapse><Svg width="10" height="6" viewBox="0 0 10 6"><path d="M1 5l4-4 4 4" /></Svg></Collapse>
    </Ribbon>

    <Main>
      <Side>
        <SlideNo>1</SlideNo>
        <Thumb />
      </Side>
      <Stage>
        <Slide>
          <Placeholder $h={191} $title>按一下以新增標題</Placeholder>
          <Placeholder $h={133}>按一下以新增子標題</Placeholder>
        </Slide>
      </Stage>
    </Main>

    <Status>
      <StatusText $w={97}>投影片 1 / 1</StatusText>
      <StatusText $w={111}>中文 (繁體，台灣)</StatusText>
      <Svg $c="#555" width="16" height="16" viewBox="0 0 16 16"><circle cx="7" cy="3" r="1.500" /><path d="M1 3q1 3 4 3h4q2 0 3-3M5 6v4l-2 5M9 6v3M8 13l2 2 5-6" /></Svg>
      <StatusText $ml={3}>協助工具: 一切準備就緒</StatusText>
      <StatusRight>
        <Svg $c="#555" width="17" height="14" viewBox="0 0 17 14"><path d="M0 7.500h17M0 10.500h17M0 13.500h17M6 3l2.500-2L11 3" /></Svg>
        <StatusText $ml={2}>備忘稿</StatusText>
        <ViewBtn $on $ml={19}><Svg $c="#555" width="14" height="12" viewBox="0 0 14 12"><path d="M.5.500h13v11H.5zM3.500 2.500h8v5h-8zM3.500 9.500h8" /></Svg></ViewBtn>
        <ViewBtn><Svg $c="#555" width="14" height="12" viewBox="0 0 14 12"><path d="M.5.500h5v4h-5zM8.500.500h5v4h-5zM.5 7.500h5v4h-5zM8.500 7.500h5v4h-5z" /></Svg></ViewBtn>
        <ViewBtn><Svg $c="#555" width="13" height="13" viewBox="0 0 13 13"><path d="M.5.500h12v12H.5zM6.500.500v12M2.500 3.500h2M2.500 6h2M2.500 8.500h2M8.500 3.500h2M8.500 6h2M8.500 8.500h2" /></Svg></ViewBtn>
        <ViewBtn><Svg $c="#555" width="13" height="13" viewBox="0 0 13 13"><path d="M0 .500h13M1.500.500v8h10v-8M6.500 8.500v4M3.500 12.500h6" /></Svg></ViewBtn>
        <ZoomEnd><Svg $c="#555" width="7" height="1" viewBox="0 0 7 1"><path d="M0 .5h7" /></Svg></ZoomEnd>
        <Zoom><ZoomKnob /><ZoomTick /></Zoom>
        <Svg $c="#555" width="7" height="7" viewBox="0 0 7 7"><path d="M0 3.500h7M3.500 0v7" /></Svg>
        <StatusText $ml={14} $w={37}>76%</StatusText>
        <Svg $c="#555" width="15" height="15" viewBox="0 0 15 15"><path d="M4.500 3.500h6v8h-6zM5.500 2l2-1.500 2 1.500M5.500 13l2 1.500 2-1.500M2.500 5.500L.5 7.500l2 2M12.500 5.500l2 2-2 2" /></Svg>
      </StatusRight>
    </Status>

    <RedBox $l={54} $t={30} $w={54} $h={43} />
    <RedBox $l={95} $t={93} $w={71} $h={52} />
    <Badge $l={31} $t={12} $d={40}>1</Badge>
    <Badge $l={75} $t={86} $d={36}>2</Badge>
  </Frame>
);

export default App;
